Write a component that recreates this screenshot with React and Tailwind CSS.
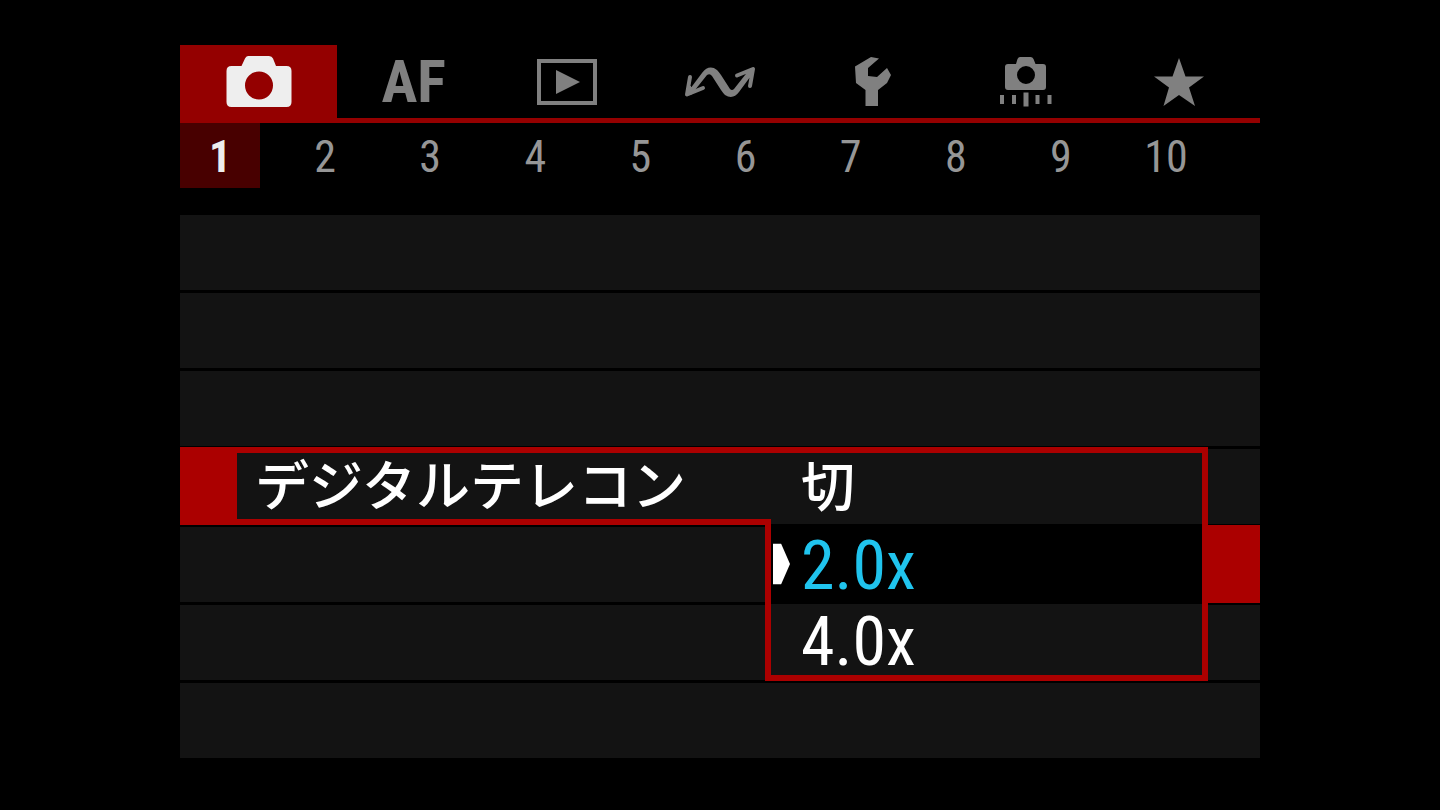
import React, { useState } from 'react'
import clsx from 'clsx'

const CameraIcon = () => (
  <svg width="66" height="52" viewBox="0 0 66 52" fill="currentColor" fillRule="evenodd" aria-hidden="true">
    <path d="M22 0h21q3 0 4 2.500L50 10h10.500q5 0 5 5v31q0 5-5 5h-55q-5 0-5-5V15q0-5 5-5H15.500l3.500-7.500Q20 0 22 0ZM33 15.500a14 14 0 1 0 0 28a14 14 0 1 0 0-28Z" />
  </svg>
)

const AfIcon = () => <span className="text-[60px] font-bold leading-[60px]">AF</span>

const PlayIcon = () => (
  <svg width="60" height="46" viewBox="0 0 60 46" aria-hidden="true">
    <rect x="2" y="2" width="56" height="42" fill="none" stroke="currentColor" strokeWidth="4" />
    <path d="M19 11v24l24-12Z" fill="currentColor" />
  </svg>
)

const TransferIcon = () => (
  <svg width="72" height="32" viewBox="0 0 72 32" fill="currentColor" stroke="currentColor" strokeLinecap="round" strokeLinejoin="round" aria-hidden="true">
    <path stroke="none" d="M3 27L18 7Q25-2 33 4Q35 6 37 9L46 23Q48 25 50 23L65 4L69 7L55 26Q49 34 41 29Q39 27 37 24L28 10Q26 7 23 9L7 29Z" />
    <path d="M6 11L3 28.500L19 22M53 9.500L69 3L66 20" fill="none" strokeWidth="4" />
    <path d="M3 28.500L5 19L11 25ZM69 3L61 6L67 13Z" strokeWidth="1" />
  </svg>
)

const WrenchIcon = () => (
  <svg width="38" height="50" viewBox="0 0 38 50" fill="currentColor" aria-hidden="true">
    <path d="M1 9.500L17 0L25 1.500L14 11V19L23 20L33 11L37 18L33 26L24 33V49H11.500V33L2 26Z" />
  </svg>
)

const CustomIcon = () => (
  <svg width="52" height="50" viewBox="0 0 52 50" fill="currentColor" fillRule="evenodd" aria-hidden="true">
    <path d="M20 0h10.500q2 0 3 2l2 5h7.500q3 0 3 3V30q0 3-3 3H8q-3 0-3-3V10q0-3 3-3h8l1.500-5q1-2 2.500-2ZM26 9a9 9 0 1 0 0 18a9 9 0 1 0 0-18Z" />
    <path d="M0 38h4v9H0ZM12 38h4v9h-4ZM23.500 35.500h5V49.500h-5ZM35.500 38h4v9h-4ZM47.500 38h4v9h-4Z" />
  </svg>
)

const StarIcon = () => (
  <svg width="50" height="48" viewBox="0 0 50 48" fill="currentColor" aria-hidden="true">
    <path d="M25 0L31.500 18.500H50L35 29.500L41 48L25 37L9.500 48L15 29.500L0 18.500H18.500Z" />
  </svg>
)

const tabs = [
  { name: 'Shooting', Icon: CameraIcon },
  { name: 'AF', Icon: AfIcon },
  { name: 'Playback', Icon: PlayIcon },
  { name: 'Communication', Icon: TransferIcon },
  { name: 'Setup', Icon: WrenchIcon },
  { name: 'Custom functions', Icon: CustomIcon },
  { name: 'My menu', Icon: StarIcon },
]

const pages = [1, 2, 3, 4, 5, 6, 7, 8, 9, 10]
const options = ['切', '2.0x', '4.0x']

const EmptyRow = () => <li className="h-[78px] border-t-2 border-b border-black bg-[#131313]" />

const Option = ({ text, first, last, selected, onSelect }) => (
  <li
    className={clsx(
      'relative flex border-r-6 border-[#ab0000]',
      first ? 'ml-[6px] border-t-6' : 'border-l-6',
      last && 'border-b-6',
      first || last ? 'h-[77px]' : 'h-20',
      selected ? 'bg-black' : 'bg-[#131313]'
    )}
  >
    {selected && (
      <svg className="absolute left-[2px] top-1/2 -translate-y-1/2" width="17" height="41" viewBox="0 0 17 41" aria-hidden="true">
        <path d="M0 0h8l9 20.500L8 41H0Z" fill="white" />
      </svg>
    )}
    <button
      type="button"
      aria-pressed={selected}
      onClick={onSelect}
      className={clsx('flex flex-1 items-center pl-[30px] text-left', selected ? 'text-[#20c4ee]' : 'text-white')}
    >
      <span className={first ? 'text-[54px] font-medium leading-[60px]' : 'pt-1 text-[68px] leading-[66px]'}>{text}</span>
    </button>
    {selected && <span className="absolute bottom-px left-full top-px w-[58px] bg-[#ab0000]" />}
  </li>
)

const App = () => {
  const [tab, setTab] = useState(0)
  const [page, setPage] = useState(1)
  const [choice, setChoice] = useState('2.0x')

  return (
    <div className="min-h-screen bg-black pt-[45px] font-['Roboto_Condensed','Noto_Sans_CJK_JP',sans-serif]">
      <main className="mx-auto w-3/4">
        <nav className="flex h-[78px] border-b-5 border-[#940000] pr-1">
          {tabs.map(({ name, Icon }, i) => (
            <button
              key={name}
              type="button"
              aria-label={name}
              onClick={() => setTab(i)}
              className={clsx(
                'flex items-center justify-center',
                i === 0 ? 'w-[157px]' : 'flex-1',
                tab === i ? 'bg-[#940000] text-[#eeeeee]' : 'text-[#808080]'
              )}
            >
              <Icon />
            </button>
          ))}
        </nav>

        <nav className="flex justify-between pr-[54px]">
          {pages.map((n) => (
            <button
              key={n}
              type="button"
              onClick={() => setPage(n)}
              className={clsx(
                'h-[65px] w-20 pt-1 text-[44px] leading-[61px]',
                page === n ? 'bg-[#480000] font-bold text-[#eeeeee]' : 'text-[#969696]'
              )}
            >
              {n}
            </button>
          ))}
        </nav>

        <ul className="mt-[25px]">
          <EmptyRow />
          <EmptyRow />
          <EmptyRow />
          <li className="flex h-[78px]">
            <div className="flex flex-1 items-center border-y-6 border-l-57 border-[#ab0000] bg-[#131313] pl-[18px]">
              <span className="whitespace-nowrap pt-1 text-[54px] font-medium leading-[60px] text-white">デジタルテレコン</span>
            </div>
            <div className="relative w-[437px]">
              <ul className="absolute right-0 top-0 z-10 w-[443px]">
                {options.map((text, i) => (
                  <Option
                    key={text}
                    text={text}
                    first={i === 0}
                    last={i === options.length - 1}
                    selected={choice === text}
                    onSelect={() => setChoice(text)}
                  />
                ))}
              </ul>
            </div>
            <div className="w-[52px] border-t-2 border-b border-black bg-[#131313]" />
          </li>
          <EmptyRow />
          <EmptyRow />
          <EmptyRow />
        </ul>
      </main>
    </div>
  )
}

export default App
